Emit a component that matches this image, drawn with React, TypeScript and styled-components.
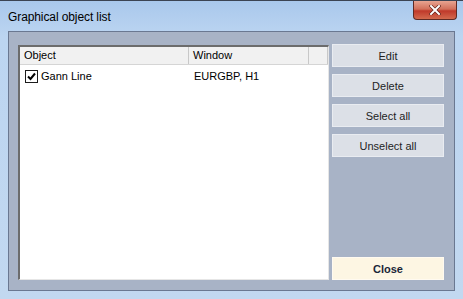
import styled, { createGlobalStyle } from "styled-components"

const Global = createGlobalStyle`
  html, body {
    margin: 0;
    padding: 0;
  }
  body {
    width: 463px;
    height: 299px;
    overflow: hidden;
    font-family: "Liberation Sans", Arial, sans-serif;
  }
`

const Frame = styled.div`
  position: relative;
  width: 463px;
  height: 299px;
  box-sizing: border-box;
  padding: 0 8px 8px 8px;
  display: flex;
  flex-direction: column;
  background: linear-gradient(180deg, #a9c8ec 0%, #bcd5f1 12%, #c2d8f0 100%);
  border-top: 1px solid #3b4453;
`

const TitleBar = styled.div`
  height: 30px;
  display: flex;
  align-items: center;
  justify-content: space-between;
`

const Title = styled.div`
  font-size: 12px;
  color: #000;
  padding-top: 2px;
  letter-spacing: -0.1px;
`

const CloseX = styled.div`
  position: absolute;
  top: 0;
  right: 6px;
  width: 44px;
  height: 19px;
  box-sizing: border-box;
  border: 1px solid #5e2a24;
  border-top: none;
  border-radius: 0 0 4px 4px;
  background: linear-gradient(180deg, #e8a491 0%, #d2705a 45%, #c0392a 55%, #d36a4e 100%);
  display: flex;
  align-items: center;
  justify-content: center;
`

const Client = styled.div`
  flex: 1;
  box-sizing: border-box;
  background: #a8b3c6;
  border: 1px solid #6a7891;
  padding: 12px 10px 10px 9px;
  display: grid;
  grid-template-columns: 311px 112px;
  column-gap: 3px;
`

const ListBox = styled.div`
  margin-top: 1px;
  background: #fff;
  border-top: 2px solid #6c6c6c;
  border-left: 2px solid #6c6c6c;
  border-right: 1px solid #e6e6e6;
  border-bottom: 1px solid #e6e6e6;
  display: flex;
  flex-direction: column;
`

const HeaderRow = styled.div`
  display: grid;
  grid-template-columns: 169px 120px 1fr;
  height: 17px;
  background: #f1f1f1;
  border-bottom: 1px solid #d5d5d5;
`

const HeaderCell = styled.div`
  font-size: 11px;
  line-height: 17px;
  padding-left: 4px;
  color: #000;
  border-right: 1px solid #c8c8c8;
`

const Row = styled.div`
  display: grid;
  grid-template-columns: 169px 120px 1fr;
  height: 18px;
  align-items: center;
  margin-top: 2px;
`

const Cell = styled.div`
  font-size: 11px;
  padding-left: 5px;
  display: flex;
  align-items: center;
  gap: 3px;
  color: #000;
`

const Check = styled.div`
  width: 11px;
  height: 11px;
  border: 1px solid #1c1c1c;
  background: #fff;
  display: flex;
  align-items: center;
  justify-content: center;
`

const ButtonColumn = styled.div`
  display: flex;
  flex-direction: column;
  gap: 7px;
`

const Button = styled.div<{ $primary?: boolean }>`
  height: 23px;
  box-sizing: border-box;
  display: flex;
  align-items: center;
  justify-content: center;
  font-size: 11px;
  font-weight: ${(p) => (p.$primary ? "bold" : "normal")};
  color: ${(p) => (p.$primary ? "#1a2638" : "#1e1e1e")};
  background: ${(p) => (p.$primary ? "#fdf6e3" : "#dce0e7")};
  border: 1px solid ${(p) => (p.$primary ? "#fffaf0" : "#e9ecf1")};
`

const Spacer = styled.div`
  flex: 1;
`

export default function App() {
  return (
    <>
      <Global />
      <Frame>
        <TitleBar>
          <Title>Graphical object list</Title>
        </TitleBar>
        <CloseX>
          <svg width="12" height="10" viewBox="0 0 12 10">
            <path d="M2 1 L10 9 M10 1 L2 9" stroke="#5a1a10" strokeWidth="3.2" strokeLinecap="square" />
            <path d="M2 1 L10 9 M10 1 L2 9" stroke="#fff" strokeWidth="2" strokeLinecap="square" />
          </svg>
        </CloseX>
        <Client>
          <ListBox>
            <HeaderRow>
              <HeaderCell>Object</HeaderCell>
              <HeaderCell>Window</HeaderCell>
              <HeaderCell />
            </HeaderRow>
            <Row>
              <Cell>
                <Check>
                  <svg width="9" height="9" viewBox="0 0 9 9">
                    <path d="M1 4.5 L3.5 7 L8 1.5" stroke="#000" strokeWidth="2" fill="none" />
                  </svg>
                </Check>
                Gann Line
              </Cell>
              <Cell>EURGBP, H1</Cell>
              <Cell />
            </Row>
          </ListBox>
          <ButtonColumn>
            <Button>Edit</Button>
            <Button>Delete</Button>
            <Button>Select all</Button>
            <Button>Unselect all</Button>
            <Spacer />
            <Button $primary>Close</Button>
          </ButtonColumn>
        </Client>
      </Frame>
    </>
  )
}
